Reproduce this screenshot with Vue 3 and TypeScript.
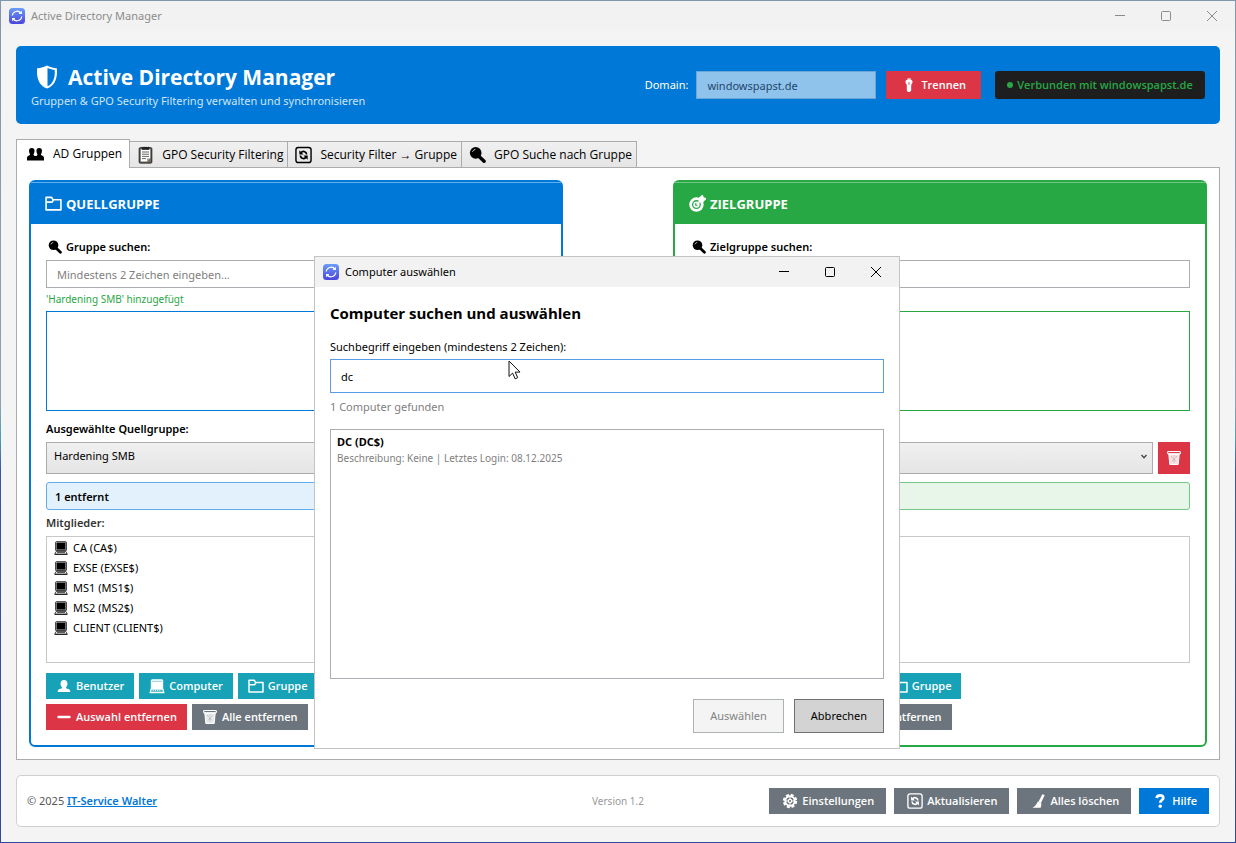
<script setup lang="ts">
import { ref } from 'vue'

interface Tab { label: string; icon: string }
interface Action { label: string; icon: string; tone: string }
interface Pane {
  id: string
  title: string
  icon: string
  searchLabel: string
  status: string
  selectLabel: string
  selected: string
  info: string
  members: string[]
}

const tabs: Tab[] = [
  { label: 'AD Gruppen', icon: 'people' },
  { label: 'GPO Security Filtering', icon: 'clipboard' },
  { label: 'Security Filter → Gruppe', icon: 'syncbox' },
  { label: 'GPO Suche nach Gruppe', icon: 'lens' },
]
const activeTab = ref(0)

const panes: Pane[] = [
  {
    id: 'source',
    title: 'QUELLGRUPPE',
    icon: 'folder',
    searchLabel: 'Gruppe suchen:',
    status: "'Hardening SMB' hinzugefügt",
    selectLabel: 'Ausgewählte Quellgruppe:',
    selected: 'Hardening SMB',
    info: '1 entfernt',
    members: ['CA (CA$)', 'EXSE (EXSE$)', 'MS1 (MS1$)', 'MS2 (MS2$)', 'CLIENT (CLIENT$)'],
  },
  {
    id: 'target',
    title: 'ZIELGRUPPE',
    icon: 'target',
    searchLabel: 'Zielgruppe suchen:',
    status: '',
    selectLabel: 'Ausgewählte Zielgruppe:',
    selected: '',
    info: '',
    members: [],
  },
]

const addActions: Action[] = [
  { label: 'Benutzer', icon: 'user', tone: 'teal' },
  { label: 'Computer', icon: 'pc', tone: 'teal' },
  { label: 'Gruppe', icon: 'folder', tone: 'teal' },
]
const removeActions: Action[] = [
  { label: 'Auswahl entfernen', icon: 'minus', tone: 'red' },
  { label: 'Alle entfernen', icon: 'bin', tone: 'grey' },
]
const footerActions: Action[] = [
  { label: 'Einstellungen', icon: 'gear', tone: 'grey' },
  { label: 'Aktualisieren', icon: 'syncbox', tone: 'grey' },
  { label: 'Alles löschen', icon: 'broom', tone: 'grey' },
  { label: 'Hilfe', icon: 'question', tone: 'blue' },
]

const domain = ref('windowspapst.de')
const query = ref('dc')
</script>

<template>
  <div class="desktop">
    <svg class="sprite" aria-hidden="true">
      <defs>
        <linearGradient id="logo-fill" x1="0" y1="0" x2="0" y2="1">
          <stop offset="0" stop-color="#6b9cf8" />
          <stop offset="1" stop-color="#4a45dc" />
        </linearGradient>
      </defs>
      <symbol id="logo" viewBox="0 0 16 16">
        <rect width="16" height="16" rx="3.500" fill="url(#logo-fill)" />
        <g fill="none" stroke="#fff" stroke-width="1.200">
          <path d="M3.200 7.500A4.900 4.900 0 0 1 11.800 5M12.800 8.500A4.900 4.900 0 0 1 4.200 11" />
          <path d="M12.300 3.200v2.200h-2.200M3.700 12.800v-2.200h2.200" />
        </g>
      </symbol>
      <symbol id="shield" viewBox="0 0 22 24">
        <path d="M11 .5C8.500 2 5 3 1.200 3.200.2 12 2.500 20.500 11 23.500 19.500 20.500 21.800 12 20.800 3.200 17 3 13.500 2 11 .5z" fill="#fff" />
        <path d="M11.500 3C14 4 16.500 4.700 18.700 4.900 19.200 12 17.500 18.500 11.500 21.300z" fill="#0078d7" />
      </symbol>
      <symbol id="people" viewBox="0 0 16 16">
        <path d="M4.500 2.300c1.800 0 2.600 1.100 2.600 2.700S6.300 8 6.100 8.600c.2.800 1.200 1 1.900 1.300.7-.3 1.700-.5 1.900-1.300C9.700 8 8.900 6.600 8.900 5s.8-2.700 2.600-2.700S14.100 3.400 14.100 5s-.8 3-1 3.600c.3 1 2.900.8 2.900 3v2.400H0v-2.400c0-2.200 2.600-2 2.900-3C2.700 8 1.900 6.600 1.900 5s.8-2.700 2.600-2.700z" fill="currentColor" />
      </symbol>
      <symbol id="clipboard" viewBox="0 0 16 18">
        <rect x="1.700" y="1.700" width="12.600" height="15.400" rx="1" fill="#71695f" stroke="#222" />
        <path d="M3.300 3.300h9.400v8.700l-3 3.500H3.300z" fill="#fff" />
        <path d="M4.500 6h7M4.500 8.200h7M4.500 10.400h7M4.500 12.600h4" stroke="#555" stroke-width=".9" />
        <path d="M4.300 1.300h7.400v2.500H4.300z" fill="#222" />
        <path d="M5.300.8v1M7.200.8v1M9.100.8v1M11 .8v1" stroke="#222" />
        <path d="M9.500 15.500v-3h3z" fill="#999" />
      </symbol>
      <symbol id="syncbox" viewBox="0 0 18 18">
        <rect x="1" y="1" width="16" height="16" rx="2.500" fill="none" stroke="currentColor" stroke-width="1.500" />
        <path d="M6.200 6.800C7.200 5.400 9 5 10.300 5.600c1.200.5 1.900 1.500 2 2.900M11.800 11.200C10.800 12.600 9 13 7.700 12.400c-1.200-.5-1.900-1.500-2-2.900" fill="none" stroke="currentColor" stroke-width="1.800" />
        <path d="M4.600 4v4.400H9zM13.400 14V9.600H9z" fill="currentColor" />
      </symbol>
      <symbol id="lens" viewBox="0 0 16 16">
        <circle cx="6.300" cy="6" r="5.500" fill="currentColor" />
        <path d="M9.700 9.600l4.500 4.300" stroke="currentColor" stroke-width="3.200" stroke-linecap="round" />
        <path d="M3.400 4.600a3.400 3.400 0 0 1 2.200-1.800" stroke="#ddd" fill="none" stroke-width=".9" stroke-linecap="round" />
      </symbol>
      <symbol id="folder" viewBox="0 0 16 16">
        <path d="M1 14V2.200h5.200l1.400 2.300h7.400V14zM1.200 6.700h5.500l1.300-2" fill="none" stroke="currentColor" stroke-width="1.500" stroke-linejoin="round" />
      </symbol>
      <symbol id="target" viewBox="0 0 16 16">
        <circle cx="7" cy="9" r="5.500" fill="none" stroke="currentColor" stroke-width="2.600" />
        <circle cx="7" cy="9" r="2.200" fill="none" stroke="currentColor" stroke-width="1.600" />
        <path d="M7 9l4.600-4.500" stroke="currentColor" stroke-width="1.600" />
        <path d="M10 5.800V3L12.500.6l.8 2.100 2.300.8L13 6z" fill="currentColor" stroke="currentColor" stroke-width="1.400" />
      </symbol>
      <symbol id="host" viewBox="0 0 14 14">
        <rect x="1.700" y=".8" width="10.600" height="8.800" rx=".6" fill="#000" stroke="#333" />
        <rect x="2.500" y="1.600" width="9" height="7.200" fill="none" stroke="#b5b5b5" stroke-width=".6" />
        <path d="M2.200 10.400h9.600l1.500 2.800H.7z" fill="#fff" stroke="#333" stroke-width=".9" />
        <path d="M3 11.400h8" stroke="#555" stroke-width="1.100" />
        <path d="M.7 13.300h12.600" stroke="#111" />
      </symbol>
      <symbol id="user" viewBox="0 0 16 16">
        <path d="M8 2c2.300 0 3.500 1.500 3.500 3.600S10.400 9 9.900 9.700c.3 1.300 4.300 1 4.300 3.300v1H1.800v-1c0-2.300 4-2 4.300-3.300C5.600 9 4.500 7.700 4.500 5.600S5.700 2 8 2z" fill="currentColor" />
      </symbol>
      <symbol id="pc" viewBox="0 0 16 16">
        <rect x="2.300" y="1.800" width="11.400" height="8.700" rx=".6" fill="currentColor" stroke="currentColor" />
        <path d="M2.200 11h11.600l1 3.500H1.200z" fill="none" stroke="currentColor" stroke-width="1.300" />
        <path d="M3.500 12.800h9" stroke="currentColor" stroke-dasharray="1.500 .7" />
        <path d="M3 3.300h10" stroke="#17a2b8" stroke-width=".5" />
      </symbol>
      <symbol id="minus" viewBox="0 0 16 16">
        <path d="M2.500 8h11" stroke="currentColor" stroke-width="2.400" stroke-linecap="round" />
      </symbol>
      <symbol id="bin" viewBox="0 0 16 16">
        <rect x="1.700" y="1.500" width="12.600" height="2.300" rx=".8" fill="none" stroke="currentColor" stroke-width="1.200" />
        <path d="M2.800 4h10.400l-1 10.500H3.800z" fill="currentColor" fill-opacity=".85" stroke="currentColor" />
        <path d="M5 6l5.500 6M11 6l-5.500 6M8 5.500v7.500" stroke="#888" stroke-width=".6" stroke-dasharray="1 1" />
      </symbol>
      <symbol id="gear" viewBox="0 0 16 16">
        <circle cx="8" cy="8" r="6" fill="none" stroke="currentColor" stroke-width="2.400" stroke-dasharray="2.900 1.812" />
        <circle cx="8" cy="8" r="4.700" fill="none" stroke="currentColor" stroke-width="2" />
        <circle cx="8" cy="8" r="1.700" fill="none" stroke="currentColor" stroke-width="1.200" />
        <path d="M8 3v3.500M8 9.500V13M3 8h3.500M9.500 8H13" stroke="currentColor" />
      </symbol>
      <symbol id="broom" viewBox="0 0 16 16">
        <path d="M12.300 1.300l2.400.8-3.700 8-2.600-1z" fill="currentColor" />
        <path d="M7.800 8.400l3.400 1.500c.3 2 0 3.500-.6 4.800H2.300c2.600-1.400 4.400-3.300 5.500-6.300z" fill="currentColor" />
      </symbol>
      <symbol id="question" viewBox="0 0 16 16">
        <path d="M4.700 5.200C4.900 3 6.300 2.400 8 2.400s3.300.8 3.300 2.500c0 2.200-3 2.200-3 4.900" fill="none" stroke="currentColor" stroke-width="2.700" />
        <circle cx="8.200" cy="13.200" r="1.700" fill="currentColor" />
      </symbol>
      <symbol id="plug" viewBox="0 0 16 16">
        <path d="M4.500 4.700C4.500 3 6 2.600 6.700 2.400V1h1v1.200h.8V1h1v1.400c.7.200 2 .8 2 2.300 0 1.800-1 2.300-1.300 3.300v5.500L8.800 15H7l-1.200-1.500V8c-.3-1-1.300-1.500-1.300-3.300z" fill="currentColor" />
        <path d="M8 5v3" stroke="#dc3545" stroke-width=".8" />
      </symbol>
    </svg>

    <div class="window">
      <header class="titlebar inactive">
        <svg class="app-icon"><use href="#logo" /></svg>
        <span class="caption">Active Directory Manager</span>
        <button class="wctl" aria-label="Minimieren"><svg viewBox="0 0 12 12"><path d="M1 5.500h10" /></svg></button>
        <button class="wctl" aria-label="Maximieren"><svg viewBox="0 0 12 12"><rect x="1.500" y="1.500" width="9" height="9" rx="1" /></svg></button>
        <button class="wctl" aria-label="Schließen"><svg viewBox="0 0 12 12"><path d="M1 1l10 10M11 1L1 11" /></svg></button>
      </header>

      <div class="content">
        <section class="banner">
          <div class="brand">
            <h1><svg class="shield"><use href="#shield" /></svg>Active Directory Manager</h1>
            <p>Gruppen &amp; GPO Security Filtering verwalten und synchronisieren</p>
          </div>
          <label for="domain">Domain:</label>
          <input id="domain" v-model="domain" class="domain" type="text" disabled />
          <button class="btn red disconnect"><svg class="icon"><use href="#plug" /></svg>Trennen</button>
          <span class="badge"><i class="dot"></i>Verbunden mit windowspapst.de</span>
        </section>

        <nav class="tabs" role="tablist">
          <button
            v-for="(tab, i) in tabs"
            :key="tab.label"
            class="tab"
            :class="{ active: i === activeTab }"
            role="tab"
            :aria-selected="i === activeTab"
            @click="activeTab = i"
          >
            <svg class="tab-icon"><use :href="'#' + tab.icon" /></svg>{{ tab.label }}
          </button>
        </nav>

        <main class="panel">
          <section v-for="pane in panes" :key="pane.id" class="card" :class="pane.id">
            <h2><svg class="head-icon"><use :href="'#' + pane.icon" /></svg>{{ pane.title }}</h2>
            <div class="card-body">
              <label class="label" :for="pane.id + '-search'">
                <svg class="label-icon"><use href="#lens" /></svg>{{ pane.searchLabel }}
              </label>
              <input :id="pane.id + '-search'" class="search" type="text" placeholder="Mindestens 2 Zeichen eingeben..." />
              <p class="status">{{ pane.status }}</p>
              <div class="results"></div>
              <label class="label chosen" :for="pane.id + '-select'">{{ pane.selectLabel }}</label>
              <div class="pick">
                <div class="select-wrap">
                  <select :id="pane.id + '-select'"><option>{{ pane.selected }}</option></select>
                  <svg class="chevron" viewBox="0 0 8 6"><path d="M1.500 1L4 3.800 6.500 1" /></svg>
                </div>
                <button class="btn red square" aria-label="Löschen"><svg class="icon"><use href="#bin" /></svg></button>
              </div>
              <div class="info">{{ pane.info }}</div>
              <p class="label members-label">Mitglieder:</p>
              <ul class="members">
                <li v-for="m in pane.members" :key="m"><svg class="host"><use href="#host" /></svg>{{ m }}</li>
              </ul>
              <div class="actions first">
                <button v-for="a in addActions" :key="a.label" class="btn" :class="a.tone">
                  <svg class="icon"><use :href="'#' + a.icon" /></svg>{{ a.label }}
                </button>
              </div>
              <div class="actions">
                <button v-for="a in removeActions" :key="a.label" class="btn" :class="a.tone">
                  <svg class="icon"><use :href="'#' + a.icon" /></svg>{{ a.label }}
                </button>
              </div>
            </div>
          </section>
        </main>

        <footer class="footer">
          <p class="copy">© 2025 <a href="#">IT-Service Walter</a></p>
          <p class="version">Version 1.2</p>
          <div class="footer-actions">
            <button v-for="a in footerActions" :key="a.label" class="btn" :class="a.tone">
              <svg class="icon"><use :href="'#' + a.icon" /></svg>{{ a.label }}
            </button>
          </div>
        </footer>
      </div>
    </div>

    <div class="dialog" role="dialog" aria-labelledby="dialog-title">
      <header class="titlebar">
        <svg class="app-icon"><use href="#logo" /></svg>
        <span id="dialog-title" class="caption">Computer auswählen</span>
        <button class="wctl" aria-label="Minimieren"><svg viewBox="0 0 12 12"><path d="M1 5.500h10" /></svg></button>
        <button class="wctl" aria-label="Maximieren"><svg viewBox="0 0 12 12"><rect x="1.500" y="1.500" width="9" height="9" rx="1" /></svg></button>
        <button class="wctl" aria-label="Schließen"><svg viewBox="0 0 12 12"><path d="M1 1l10 10M11 1L1 11" /></svg></button>
      </header>
      <div class="dialog-body">
        <h2>Computer suchen und auswählen</h2>
        <label for="query">Suchbegriff eingeben (mindestens 2 Zeichen):</label>
        <input id="query" v-model="query" type="text" />
        <p class="found">1 Computer gefunden</p>
        <ul class="hits">
          <li>
            <strong>DC (DC$)</strong>
            <span>Beschreibung: Keine | Letztes Login: 08.12.2025</span>
          </li>
        </ul>
        <div class="dialog-actions">
          <button class="plain" disabled>Auswählen</button>
          <button class="plain">Abbrechen</button>
        </div>
      </div>
      <svg class="pointer" viewBox="0 0 13 20" aria-hidden="true">
        <path d="M1 1v15.500l3.600-3.400 2.500 5.700 2.600-1.100-2.500-5.600h4.800z" fill="#fff" stroke="#111" />
      </svg>
    </div>
  </div>
</template>

<style>
body {
  margin: 0;
}
</style>

<style scoped>
* {
  box-sizing: border-box;
}
h1, h2, p, ul {
  margin: 0;
  padding: 0;
}
ul {
  list-style: none;
}
button, input, select {
  font: inherit;
  color: inherit;
  border-radius: 0;
  margin: 0;
}
.sprite {
  position: absolute;
  width: 0;
  height: 0;
}
.desktop {
  position: relative;
  display: flex;
  min-height: 100vh;
  padding: 1px;
  background: linear-gradient(#8098ae 0, #8aa4b6 48%, #4aa0b8 52%, #3a52ac 56%, #2f4a9c 100%);
  font: 11px/16px "Noto Sans", "Open Sans", sans-serif;
  color: #000;
}
h1, h2, .btn, .badge, .tab {
  font-family: "Open Sans", "Noto Sans", sans-serif;
}
.window {
  flex: 1;
  display: flex;
  flex-direction: column;
  background: #f4f4f4;
}
.titlebar {
  display: flex;
  align-items: center;
  height: 30px;
  padding-left: 8px;
  background: #f2f2f2;
}
.app-icon {
  width: 16px;
  height: 16px;
}
.caption {
  flex: 1;
  margin-left: 6px;
}
.inactive {
  color: #8c8c8c;
}
.wctl {
  display: flex;
  align-items: center;
  justify-content: center;
  width: 46px;
  height: 30px;
  padding: 0;
  border: 0;
  background: none;
}
.wctl svg {
  width: 12px;
  height: 12px;
  fill: none;
  stroke: currentColor;
}
.content {
  flex: 1;
  display: flex;
  flex-direction: column;
  padding: 15px;
}
.banner {
  display: flex;
  align-items: center;
  height: 78px;
  padding: 0 15px;
  border-radius: 5px;
  background: #0078d7;
  color: #fff;
}
.brand {
  flex: 1;
}
.brand h1 {
  display: flex;
  align-items: center;
  font-size: 21px;
  line-height: 32px;
  font-weight: 700;
}
.shield {
  width: 22px;
  height: 24px;
  margin: 0 10px 0 5px;
}
.brand p {
  color: #cfe5f8;
}
.domain {
  width: 180px;
  height: 28px;
  margin: 0 10px 0 8px;
  padding: 0 10px;
  border: 1px solid #6ca6d8;
  background: #8fc3ec;
  color: #24466b;
}
.badge {
  display: flex;
  align-items: center;
  justify-content: center;
  min-width: 210px;
  height: 28px;
  margin-left: 14px;
  padding: 0 10px;
  border-radius: 3px;
  background: #1e1e1e;
  color: #28a745;
  font-weight: 600;
}
.dot {
  width: 6px;
  height: 6px;
  margin-right: 4px;
  border-radius: 50%;
  background: #28a745;
}
.btn {
  display: flex;
  align-items: center;
  height: 26px;
  padding: 0 10px;
  border: 0;
  color: #fff;
  font-weight: 600;
  white-space: nowrap;
}
.icon {
  width: 16px;
  height: 16px;
  margin-right: 4px;
}
.teal { background: #17a2b8; }
.red { background: #dc3545; }
.grey { background: #6c757d; }
.blue { background: #0078d7; }
.disconnect {
  height: 28px;
  padding: 0 15px;
}
.tabs {
  display: flex;
  align-items: flex-end;
  margin-top: 15px;
}
.tab {
  display: flex;
  align-items: center;
  height: 26px;
  margin-left: -1px;
  padding: 0 4px 0 7px;
  border: 1px solid #acacac;
  border-bottom: 0;
  background: linear-gradient(#f0f0f0, #e5e5e5);
  font-size: 12px;
  font-weight: 500;
}
.tab.active {
  position: relative;
  height: 29px;
  margin: 0 0 -1px;
  padding: 0 7px 0 10px;
  background: #fff;
}
.tab-icon {
  width: 17px;
  height: 18px;
  margin-right: 8px;
}
.active .tab-icon {
  margin-right: 9px;
}
.panel {
  flex: 1;
  display: grid;
  grid-template-columns: 1fr 1fr;
  column-gap: 110px;
  padding: 12px;
  border: 1px solid #acacac;
  background: #fff;
}
.card {
  display: flex;
  flex-direction: column;
  border: 2px solid var(--tone);
  border-radius: 6px;
}
.source {
  --tone: #0078d7;
  --shine: #5fadeb;
  --tint: #e3f1fc;
}
.target {
  --tone: #28a745;
  --shine: #74c787;
  --tint: #e8f5e9;
}
.card h2 {
  display: flex;
  align-items: center;
  height: 42px;
  padding: 0 14px;
  border-top: 1px solid var(--shine);
  background: var(--tone);
  color: #fff;
  font-size: 13px;
  font-weight: 700;
}
.head-icon {
  width: 17px;
  height: 17px;
  margin-right: 4px;
}
.card-body {
  flex: 1;
  display: flex;
  flex-direction: column;
  padding: 15px;
}
.label {
  display: flex;
  align-items: center;
  font-weight: 600;
}
.label-icon {
  width: 14px;
  height: 14px;
  margin: 0 4px 0 2px;
}
.search {
  height: 28px;
  margin-top: 5px;
  padding: 0 10px;
  border: 1px solid #abadb3;
  background: #fff;
}
.search::placeholder {
  color: #808080;
  opacity: 1;
}
.status {
  height: 16px;
  margin: 3px 0 4px;
  font-size: 10px;
  color: #28a745;
}
.results {
  height: 100px;
  border: 1px solid var(--tone);
}
.chosen {
  margin: 10px 0 5px;
}
.pick {
  display: flex;
  gap: 5px;
}
.select-wrap {
  position: relative;
  flex: 1;
}
.select-wrap select {
  width: 100%;
  height: 32px;
  padding: 0 7px 4px;
  border: 1px solid #acacac;
  background: linear-gradient(#f0f0f0, #e5e5e5);
  appearance: none;
}
.chevron {
  position: absolute;
  right: 5px;
  top: 12px;
  width: 8px;
  height: 6px;
  fill: none;
  stroke: #444;
  stroke-width: 1.3;
}
.square {
  justify-content: center;
  width: 32px;
  height: 32px;
  padding: 0;
}
.square .icon {
  margin: 0;
}
.info {
  height: 28px;
  margin: 8px 0 5px;
  padding: 6px 8px;
  border: 1px solid var(--shine);
  border-radius: 3px;
  background: var(--tint);
  font-weight: 600;
}
.members-label {
  color: #333;
}
.members {
  flex: 1;
  min-height: 100px;
  margin: 5px 0 0;
  padding: 1px 7px;
  border: 1px solid #c8c8c8;
}
.members li {
  display: flex;
  align-items: center;
  height: 20px;
}
.host {
  width: 14px;
  height: 14px;
  margin-right: 5px;
}
.actions {
  display: flex;
  gap: 5px;
}
.first {
  margin: 10px 0 5px;
}
.footer {
  display: grid;
  grid-template-columns: 1fr auto 1fr;
  align-items: center;
  height: 52px;
  margin-top: 15px;
  padding: 0 10px;
  border: 1px solid #d0d0d0;
  border-radius: 5px;
  background: #fff;
}
.copy {
  color: #555;
}
.copy a {
  color: #0078d7;
  font-weight: 600;
}
.version {
  font-size: 10px;
  color: #999;
}
.footer-actions {
  display: flex;
  justify-content: flex-end;
  gap: 8px;
}
.footer-actions .btn {
  padding: 0 12px 0 13px;
}
.dialog {
  position: absolute;
  left: 314px;
  top: 256px;
  display: flex;
  flex-direction: column;
  width: 586px;
  border: 1px solid #c3c3c3;
  background: #fff;
}
.dialog-body {
  display: flex;
  flex-direction: column;
  padding: 15px;
}
.dialog-body h2 {
  font-size: 15px;
  line-height: 22px;
  font-weight: 700;
}
.dialog-body label {
  margin: 15px 0 4px;
}
.dialog-body input {
  height: 34px;
  padding: 0 10px;
  border: 1px solid #569de5;
  background: #fff;
}
.found {
  margin: 6px 0 14px;
  color: #808080;
}
.hits {
  height: 250px;
  padding: 4px 6px;
  border: 1px solid #abadb3;
}
.hits li {
  display: flex;
  flex-direction: column;
}
.hits span {
  color: #808080;
  font-size: 10px;
}
.dialog-actions {
  display: flex;
  justify-content: flex-end;
  gap: 10px;
  margin-top: 20px;
}
.plain {
  height: 34px;
  padding: 0 16px;
  border: 1px solid #707070;
  background: #d3d3d3;
}
.plain:disabled {
  border-color: #adb2b5;
  background: #f4f4f4;
  color: #838383;
}
.pointer {
  position: absolute;
  left: 193px;
  top: 103px;
  width: 13px;
  height: 20px;
}
</style>
